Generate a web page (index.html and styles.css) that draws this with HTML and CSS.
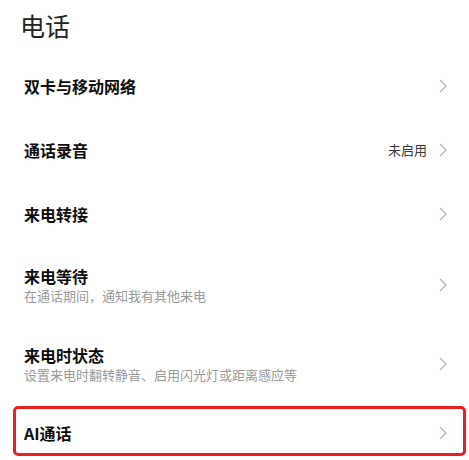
FILE: index.html
```html
<!DOCTYPE html>
<html lang="zh-CN">
<head>
<meta charset="utf-8">
<title>电话</title>
<link rel="stylesheet" href="styles.css">
</head>
<body>
<div class="page">
  <header class="header"><h1 class="title">电话</h1></header>
  <div class="list">
    <div class="row h64">
      <div class="text"><div class="label">双卡与移动网络</div></div>
      <div class="right"><svg class="chev" width="8" height="14" viewBox="0 0 8 14"><polyline points="1,1 7,7 1,13"/></svg></div>
    </div>
    <div class="row h64">
      <div class="text"><div class="label">通话录音</div></div>
      <div class="right"><span class="value">未启用</span><svg class="chev" width="8" height="14" viewBox="0 0 8 14"><polyline points="1,1 7,7 1,13"/></svg></div>
    </div>
    <div class="row h64">
      <div class="text"><div class="label">来电转接</div></div>
      <div class="right"><svg class="chev" width="8" height="14" viewBox="0 0 8 14"><polyline points="1,1 7,7 1,13"/></svg></div>
    </div>
    <div class="row h78">
      <div class="text"><div class="label">来电等待</div><div class="sub">在通话期间，通知我有其他来电</div></div>
      <div class="right"><svg class="chev" width="8" height="14" viewBox="0 0 8 14"><polyline points="1,1 7,7 1,13"/></svg></div>
    </div>
    <div class="row h80">
      <div class="text"><div class="label">来电时状态</div><div class="sub">设置来电时翻转静音、启用闪光灯或距离感应等</div></div>
      <div class="right"><svg class="chev" width="8" height="14" viewBox="0 0 8 14"><polyline points="1,1 7,7 1,13"/></svg></div>
    </div>
    <div class="row highlight">
      <div class="text"><div class="label">AI通话</div></div>
      <div class="right"><svg class="chev" width="8" height="14" viewBox="0 0 8 14"><polyline points="1,1 7,7 1,13"/></svg></div>
    </div>
  </div>
</div>
</body>
</html>
```
FILE: styles.css
```css
html, body {
  margin: 0;
  padding: 0;
  background: #ffffff;
}
body {
  font-family: "Noto Sans CJK SC", "Noto Sans", sans-serif;
  color: #111;
}
.page {
  width: 469px;
  height: 460px;
  overflow: hidden;
}
.header {
  height: 54px;
  display: flex;
  align-items: center;
  padding-left: 20px;
  box-sizing: border-box;
}
.title {
  margin: 0;
  font-size: 25px;
  font-weight: 400;
  line-height: 1;
  color: #222;
  position: relative;
  top: -2px;
}
.list {
  display: flex;
  flex-direction: column;
}
.row {
  display: flex;
  align-items: center;
  justify-content: space-between;
  padding: 0 22px 0 24px;
  box-sizing: border-box;
}
.h64 { height: 64px; }
.h78 { height: 78px; }
.h80 { height: 80px; }
.text {
  display: flex;
  flex-direction: column;
}
.label {
  font-size: 16px;
  font-weight: 700;
  line-height: 22px;
  color: #0d0d0d;
}
.sub {
  font-size: 13px;
  line-height: 18px;
  color: #999;
  margin-top: 0;
}
.right {
  display: flex;
  align-items: center;
  gap: 12px;
}
.value {
  font-size: 13px;
  color: #3a3a3a;
  line-height: 18px;
}
.chev {
  display: block;
}
.chev polyline {
  fill: none;
  stroke: #b3b3b3;
  stroke-width: 1.3;
}
.highlight {
  height: 50px;
  margin: 2px 3px 0 13px;
  border: 3px solid #e8201f;
  border-radius: 5px;
  padding: 4px 16px 0 8px;
}
```
